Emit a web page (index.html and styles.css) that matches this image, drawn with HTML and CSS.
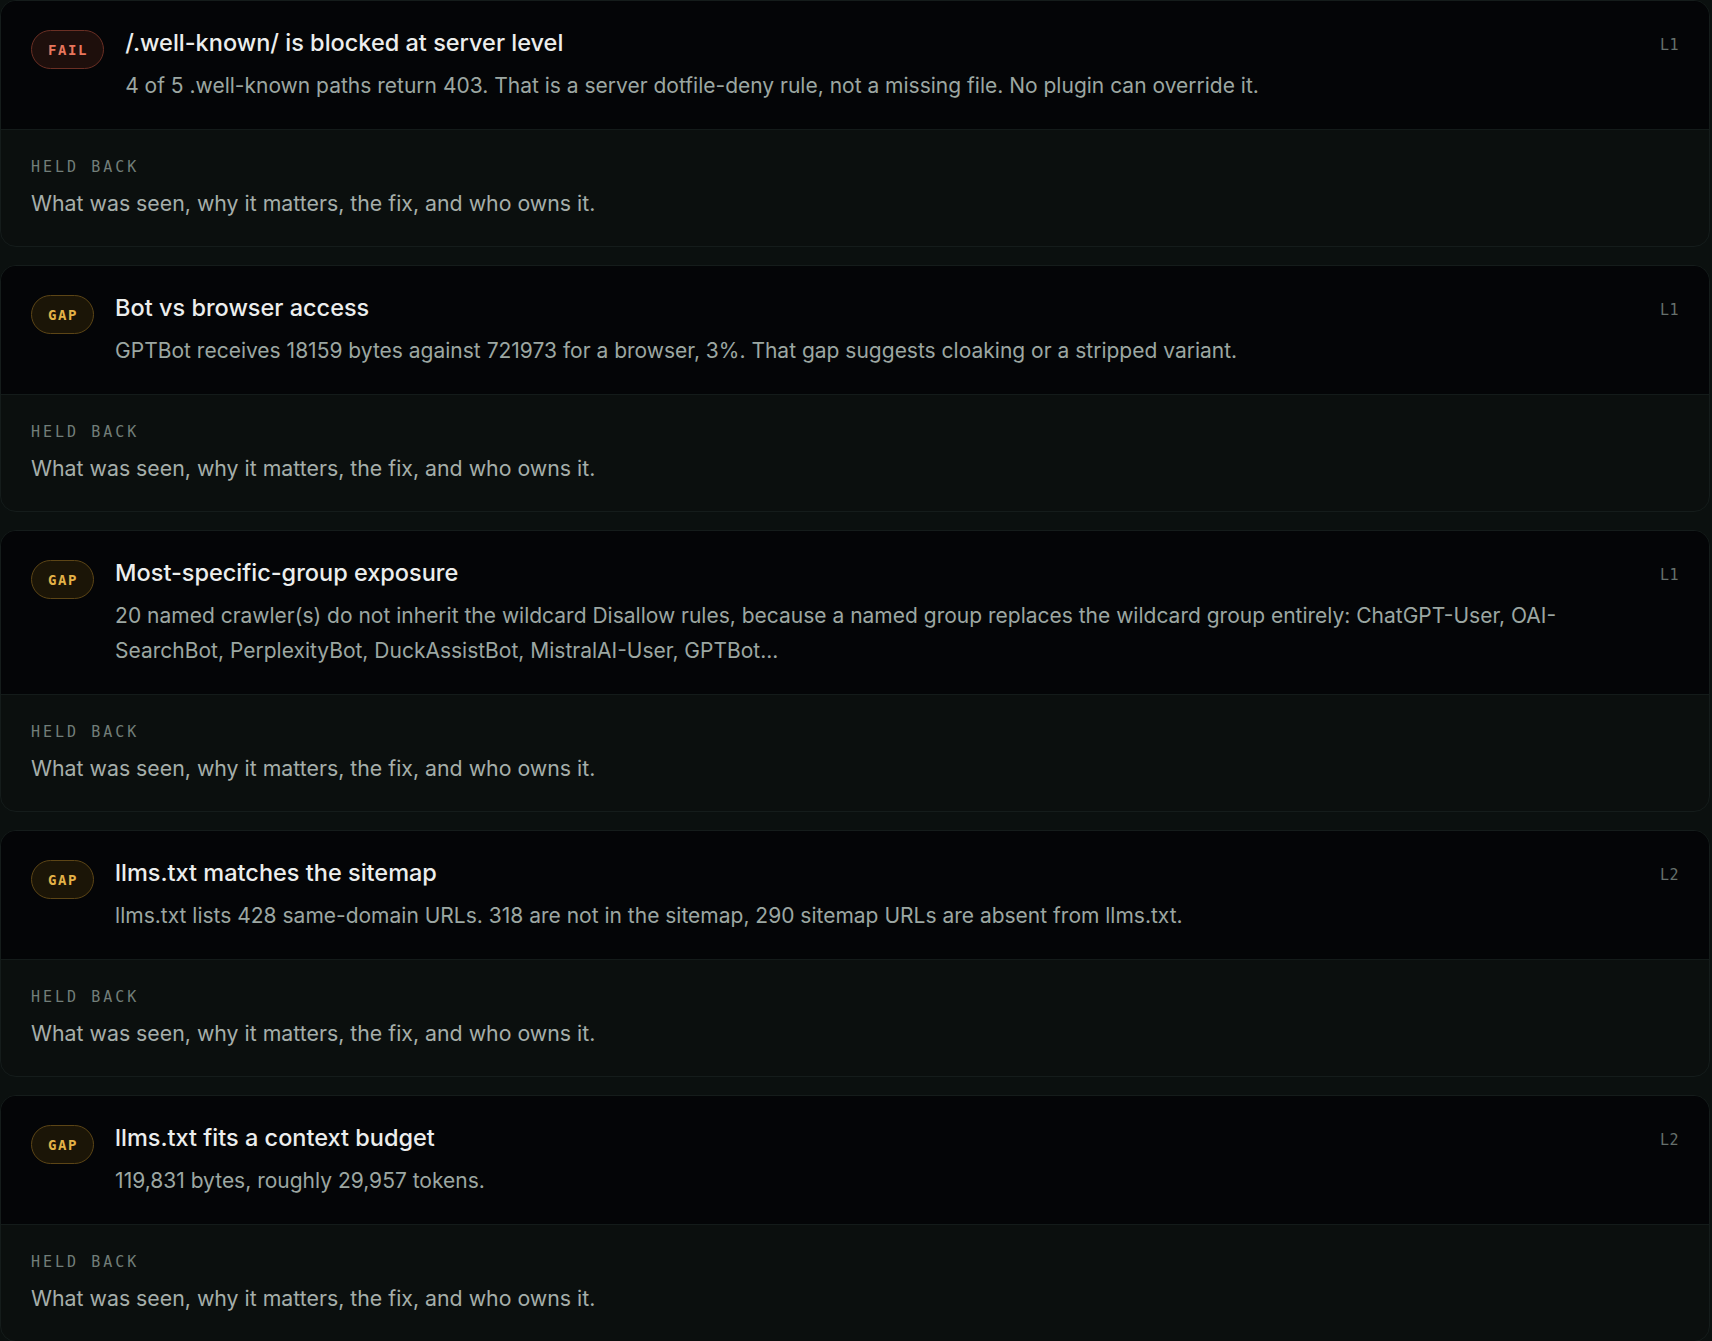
FILE: index.html
```html
<!DOCTYPE html>
<html lang="en">
<head>
<meta charset="utf-8">
<title>Findings</title>
<link rel="stylesheet" href="styles.css">
</head>
<body>
<div class="list">
  <section class="card">
    <div class="head">
      <span class="badge fail">FAIL</span>
      <div class="main">
        <h3 class="title">/.well-known/ is blocked at server level</h3>
        <p class="desc">4 of 5 .well-known paths return 403. That is a server dotfile-deny rule, not a missing file. No plugin can override it.</p>
      </div>
      <span class="level">L1</span>
    </div>
    <div class="body">
      <div class="label">HELD BACK</div>
      <p class="text">What was seen, why it matters, the fix, and who owns it.</p>
    </div>
  </section>

  <section class="card">
    <div class="head">
      <span class="badge gap">GAP</span>
      <div class="main">
        <h3 class="title">Bot vs browser access</h3>
        <p class="desc">GPTBot receives 18159 bytes against 721973 for a browser, 3%. That gap suggests cloaking or a stripped variant.</p>
      </div>
      <span class="level">L1</span>
    </div>
    <div class="body">
      <div class="label">HELD BACK</div>
      <p class="text">What was seen, why it matters, the fix, and who owns it.</p>
    </div>
  </section>

  <section class="card">
    <div class="head">
      <span class="badge gap">GAP</span>
      <div class="main">
        <h3 class="title">Most-specific-group exposure</h3>
        <p class="desc">20 named crawler(s) do not inherit the wildcard Disallow rules, because a named group replaces the wildcard group entirely: ChatGPT-User, OAI-SearchBot, PerplexityBot, DuckAssistBot, MistralAI-User, GPTBot...</p>
      </div>
      <span class="level">L1</span>
    </div>
    <div class="body">
      <div class="label">HELD BACK</div>
      <p class="text">What was seen, why it matters, the fix, and who owns it.</p>
    </div>
  </section>

  <section class="card">
    <div class="head">
      <span class="badge gap">GAP</span>
      <div class="main">
        <h3 class="title">llms.txt matches the sitemap</h3>
        <p class="desc">llms.txt lists 428 same-domain URLs. 318 are not in the sitemap, 290 sitemap URLs are absent from llms.txt.</p>
      </div>
      <span class="level">L2</span>
    </div>
    <div class="body">
      <div class="label">HELD BACK</div>
      <p class="text">What was seen, why it matters, the fix, and who owns it.</p>
    </div>
  </section>

  <section class="card">
    <div class="head">
      <span class="badge gap">GAP</span>
      <div class="main">
        <h3 class="title">llms.txt fits a context budget</h3>
        <p class="desc">119,831 bytes, roughly 29,957 tokens.</p>
      </div>
      <span class="level">L2</span>
    </div>
    <div class="body">
      <div class="label">HELD BACK</div>
      <p class="text">What was seen, why it matters, the fix, and who owns it.</p>
    </div>
  </section>
</div>
</body>
</html>
```

FILE: styles.css
```css
* { box-sizing: border-box; }

html, body {
  margin: 0;
  padding: 0;
  background: #0b100f;
}

body {
  font-family: Inter, "Noto Sans", sans-serif;
  -webkit-font-smoothing: antialiased;
}

.list {
  display: flex;
  flex-direction: column;
  gap: 18px;
  padding: 0 2px 0 0;
}

.card {
  border: 1px solid #151c1b;
  border-radius: 16px;
  overflow: hidden;
  background: #0b0f0e;
}

.head {
  display: flex;
  align-items: flex-start;
  gap: 21px;
  padding: 27px 30px 26px 30px;
  background: #040507;
  border-bottom: 1px solid #141b1a;
}

.badge {
  flex: none;
  height: 39px;
  margin-top: 2px;
  display: inline-flex;
  align-items: center;
  padding: 0 15px 0 16px;
  border-radius: 20px;
  border: 1px solid;
  font-family: "DejaVu Sans Mono", "Liberation Mono", monospace;
  font-size: 14px;
  font-weight: 600;
  letter-spacing: 1.6px;
}

.badge.fail {
  color: #e8765c;
  background: #1e0f0c;
  border-color: #6a2f24;
}

.badge.gap {
  color: #e3b247;
  background: #1b1507;
  border-color: #5c4516;
}

.main {
  flex: 1;
  min-width: 0;
}

.title {
  margin: 0 0 10px 0;
  font-size: 23.5px;
  line-height: 30px;
  font-weight: 500;
  color: #eceeed;
}

.desc {
  margin: 0;
  font-size: 21px;
  line-height: 35px;
  color: #9ca7a2;
}

.level {
  flex: none;
  padding-top: 2px;
  font-family: "DejaVu Sans Mono", "Liberation Mono", monospace;
  font-size: 15px;
  line-height: 30px;
  letter-spacing: 0.5px;
  color: #66706c;
}

.body {
  padding: 27px 30px 29px 30px;
}

.label {
  font-family: "DejaVu Sans Mono", "Liberation Mono", monospace;
  font-size: 15px;
  line-height: 20px;
  letter-spacing: 3px;
  color: #727e79;
}

.text {
  margin: 12px 0 0 0;
  font-size: 21.3px;
  line-height: 28px;
  color: #a5aeaa;
}
```
